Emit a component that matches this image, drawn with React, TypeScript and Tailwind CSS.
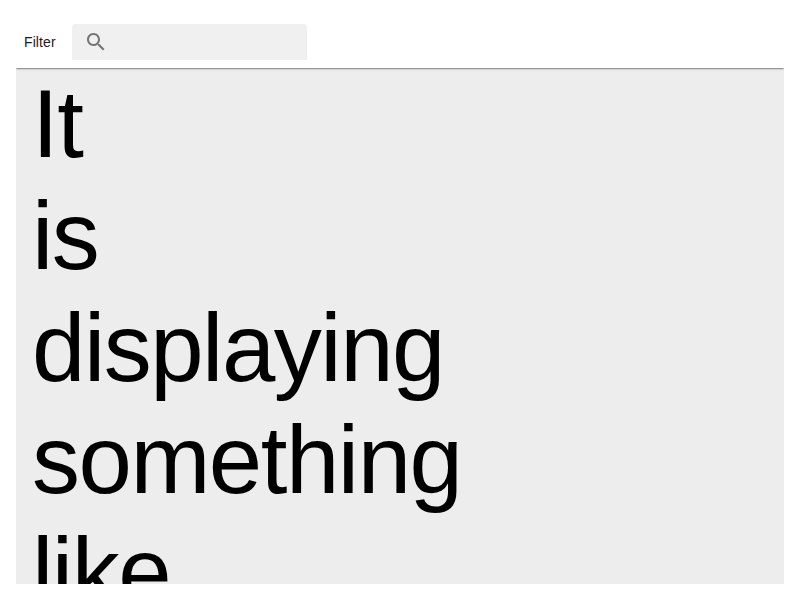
const words = ['It', 'is', 'displaying', 'something', 'like'];

export default function App() {
  return (
    <div className="h-[600px] w-[800px] bg-white p-4 font-['Liberation_Sans',sans-serif] text-black">
      <div className="flex h-full flex-col overflow-hidden">
        <header className="z-10 flex h-[52px] shrink-0 items-center bg-white px-2 shadow-[0_1px_1px_0_rgba(0,0,0,0.14),0_2px_1px_-1px_rgba(0,0,0,0.2),0_1px_3px_0_rgba(0,0,0,0.12)]">
          <label className="w-12 text-sm leading-5 tracking-[0.1px] text-[#1c1c1c]">Filter</label>
          <div className="flex h-9 w-[235px] items-center rounded-t bg-[#f0f0f0] pl-3">
            <svg className="size-6 text-[#757575]" viewBox="0 0 24 24" fill="currentColor">
              <path d="M15.5 14h-.79l-.28-.27C15.41 12.59 16 11.11 16 9.5 16 5.91 13.09 3 9.5 3S3 5.91 3 9.5 5.91 16 9.5 16c1.61 0 3.09-.59 4.23-1.57l.27.28v.79l5 4.99L20.49 19l-4.99-5zm-6 0C7.01 14 5 11.99 5 9.5S7.01 5 9.5 5 14 7.01 14 9.5 11.99 14 9.5 14z" />
            </svg>
          </div>
        </header>
        <main className="min-h-0 flex-1 overflow-hidden bg-[#ededed] px-4">
          {words.map((word) => (
            <p key={word} className="text-[96px] leading-[112px] tracking-[-1.5px]">{word}</p>
          ))}
        </main>
      </div>
    </div>
  );
}
